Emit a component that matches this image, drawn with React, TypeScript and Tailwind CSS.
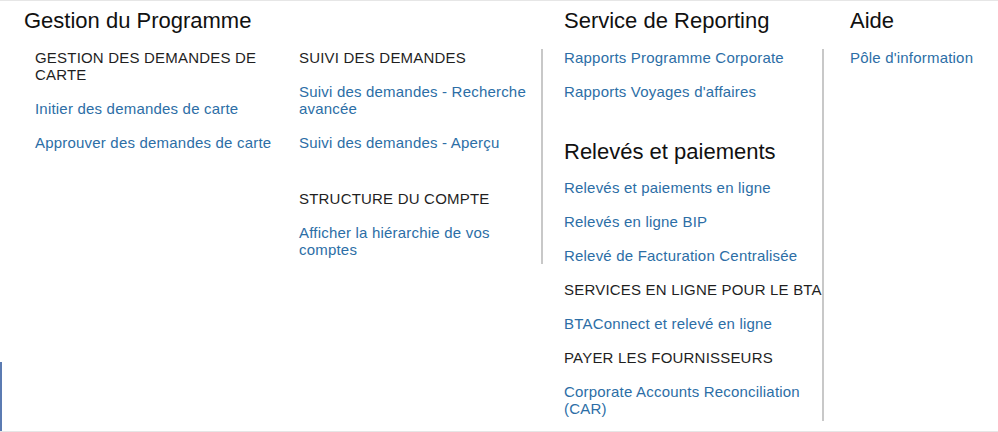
import React from "react"

type Entry = { label: string; kind: "title" | "link" }

const gestionLeft: Entry[] = [
  { label: "GESTION DES DEMANDES DE CARTE", kind: "title" },
  { label: "Initier des demandes de carte", kind: "link" },
  { label: "Approuver des demandes de carte", kind: "link" },
]

const EntryList: React.FC<{ entries: Entry[]; className?: string }> = ({ entries, className }) => (
  <ul className={`flex flex-col gap-[17px] ${className ?? ""}`}>
    {entries.map((e) => (
      <li
        key={e.label}
        className={
          e.kind === "title"
            ? "text-[15px] leading-[17px] tracking-[0.2px] text-[#1f1f1f]"
            : "text-[15px] leading-[17px] tracking-[0.2px] text-[#2c6ea6] cursor-pointer hover:underline"
        }
      >
        {e.label}
      </li>
    ))}
  </ul>
)

const Heading: React.FC<{ children: React.ReactNode; className?: string }> = ({ children, className }) => (
  <h2 className={`text-[22px] leading-[26px] text-[#111] ${className ?? ""}`}>{children}</h2>
)

export default function App() {
  return (
    <div
      className="relative h-[432px] w-[998px] overflow-hidden border-t border-b border-[#e6e6e6] bg-white"
      style={{ fontFamily: '"Liberation Sans", Arial, sans-serif' }}
    >
      <div className="flex pt-[7px]">
        {/* Gestion du Programme */}
        <div className="ml-[24px] flex flex-col">
          <Heading className="mb-[15px]">Gestion du Programme</Heading>
          <div className="flex h-[215px] border-r-2 border-[#c8c8c8] pl-[11px]">
            <div className="w-[264px] pr-[20px]">
              <EntryList entries={gestionLeft} />
            </div>
            <div className="w-[242px] pr-[8px]">
              <EntryList
                entries={[
                  { label: "SUIVI DES DEMANDES", kind: "title" },
                  { label: "Suivi des demandes - Recherche avancée", kind: "link" },
                  { label: "Suivi des demandes - Aperçu", kind: "link" },
                ]}
              />
              <EntryList
                className="mt-[39px]"
                entries={[
                  { label: "STRUCTURE DU COMPTE", kind: "title" },
                  { label: "Afficher la hiérarchie de vos comptes", kind: "link" },
                ]}
              />
            </div>
          </div>
        </div>

        {/* Service de Reporting */}
        <div className="ml-[21px] flex flex-col">
          <Heading className="mb-[15px]">Service de Reporting</Heading>
          <div className="w-[260px] border-r-2 border-[#c8c8c8] pb-[4px]">
            <EntryList
              entries={[
                { label: "Rapports Programme Corporate", kind: "link" },
                { label: "Rapports Voyages d'affaires", kind: "link" },
              ]}
            />
            <Heading className="mt-[39px] mb-[14px]">Relevés et paiements</Heading>
            <EntryList
              entries={[
                { label: "Relevés et paiements en ligne", kind: "link" },
                { label: "Relevés en ligne BIP", kind: "link" },
                { label: "Relevé de Facturation Centralisée", kind: "link" },
                { label: "SERVICES EN LIGNE POUR LE BTA", kind: "title" },
                { label: "BTAConnect et relevé en ligne", kind: "link" },
                { label: "PAYER LES FOURNISSEURS", kind: "title" },
                { label: "Corporate Accounts Reconciliation (CAR)", kind: "link" },
              ]}
            />
          </div>
        </div>

        {/* Aide */}
        <div className="ml-[26px] flex flex-col">
          <Heading className="mb-[15px]">Aide</Heading>
          <EntryList entries={[{ label: "Pôle d'information", kind: "link" }]} />
        </div>
      </div>

      <div className="absolute bottom-0 left-0 h-[69px] w-[2px] bg-[#5b7bb2]" />
    </div>
  )
}
